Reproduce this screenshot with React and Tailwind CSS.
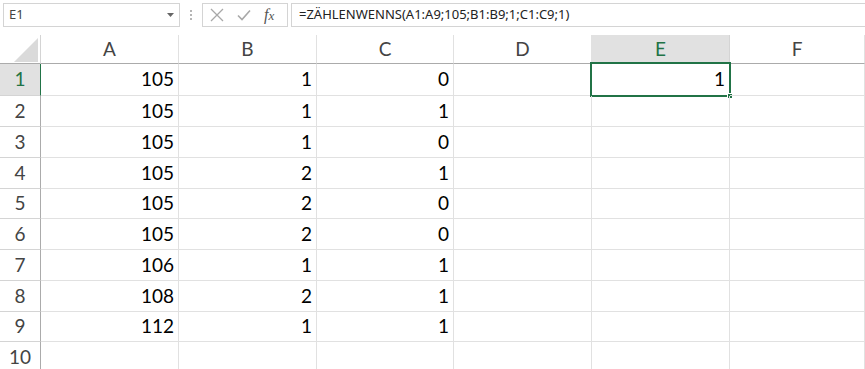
import React from "react";

const cols = ["A", "B", "C", "D", "E", "F"];
const data = [
  [105, 1, 0],
  [105, 1, 1],
  [105, 1, 0],
  [105, 2, 1],
  [105, 2, 0],
  [105, 2, 0],
  [106, 1, 1],
  [108, 2, 1],
  [112, 1, 1],
  [null, null, null],
];
const heights = ["h-[32px]", "h-[31px]", "h-[31px]", "h-[31px]", "h-[30px]", "h-[31px]", "h-[31px]", "h-[31px]", "h-[30px]", "h-[31px]"];

export default function App() {
  return (
    <div className="w-[865px] h-[369px] overflow-hidden bg-white" style={{ fontFamily: "Lato, 'Liberation Sans', sans-serif" }}>
      {/* Toolbar */}
      <div className="h-[35px] flex items-start pt-[3px]">
        <div className="ml-[3px] w-[177px] h-[24px] border border-[#d4d4d4] flex items-center justify-between pl-[5px] pr-[5px]">
          <span className="text-[13px] text-[#444]" style={{ fontFamily: "'Noto Sans', sans-serif" }}>E1</span>
          <svg width="7" height="4" viewBox="0 0 7 4"><path d="M0 0h7L3.5 4z" fill="#666" /></svg>
        </div>
        <div className="w-[22px] h-[24px] flex flex-col items-center justify-center gap-[2px]">
          <span className="w-[2px] h-[2px] bg-[#b5b5b5]" />
          <span className="w-[2px] h-[2px] bg-[#b5b5b5]" />
          <span className="w-[2px] h-[2px] bg-[#b5b5b5]" />
        </div>
        <div className="w-[86px] h-[24px] border border-[#d4d4d4] flex items-center pl-[7px]">
          <svg width="14" height="14" viewBox="0 0 14 14" className="mr-[13px]"><path d="M1 1L13 13M13 1L1 13" stroke="#a8a8a8" strokeWidth="1.3" fill="none" /></svg>
          <svg width="14" height="12" viewBox="0 0 14 12" className="mr-[13px]"><path d="M1 6.5L5 10.5L13 1.5" stroke="#a8a8a8" strokeWidth="1.6" fill="none" /></svg>
          <span className="text-[16px] italic text-[#555] leading-none" style={{ fontFamily: "'Liberation Serif', serif" }}>f<span className="text-[13px]">x</span></span>
        </div>
        <div className="ml-[3px] flex-1 h-[24px] border border-r-0 border-[#d4d4d4] flex items-center pl-[7px]">
          <span className="text-[13px] text-[#222]" style={{ fontFamily: "'Noto Sans', sans-serif" }}>=ZÄHLENWENNS(A1:A9;105;B1:B9;1;C1:C9;1)</span>
        </div>
      </div>

      {/* Grid */}
      <div className="grid grid-cols-[41px_138px_138px_137px_138px_138px_1fr]">
        {/* header row */}
        <div className="h-[29px] border-r border-b border-r-[#d4d4d4] border-b-[#ababab] relative">
          <svg width="25" height="25" viewBox="0 0 25 25" className="absolute left-[14px] top-[3px]"><path d="M24 0V24H0z" fill="#dadada" /></svg>
        </div>
        {cols.map((c) => {
          const sel = c === "E";
          return (
            <div
              key={c}
              className={
                "h-[29px] border-r border-b flex items-center justify-center text-[19px] " +
                (sel
                  ? "bg-[#e1e1e1] text-[#217346] border-r-[#d4d4d4] border-b-[#217346]"
                  : "text-[#444] border-r-[#e1e1e1] border-b-[#ababab]")
              }
            >
              {c}
            </div>
          );
        })}
        {data.map((row, i) => {
          const sel = i === 0;
          return (
            <React.Fragment key={i}>
              <div
                className={
                  heights[i] +
                  " border-b border-r flex items-center justify-center text-[19px] " +
                  (sel
                    ? "bg-[#e1e1e1] text-[#217346] border-r-[#217346] border-b-[#d4d4d4]"
                    : "text-[#444] border-r-[#ababab] border-b-[#d4d4d4]")
                }
              >
                {i + 1}
              </div>
              {[0, 1, 2, 3, 4, 5].map((j) => {
                const v = j < 3 ? row[j] : sel && j === 4 ? 1 : null;
                const selCell = sel && j === 4;
                return (
                  <div
                    key={j}
                    className={heights[i] + " border-r border-b border-[#e1e1e1] flex items-center justify-end pr-[4px] text-[19px] text-black relative"}
                  >
                    {selCell && (
                      <div className="absolute left-[-2px] top-[-2px] right-[-2px] bottom-[-2px] border-2 border-[#217346]">
                        <div className="absolute right-[-4px] bottom-[-4px] w-[6px] h-[6px] bg-[#217346] border border-white" />
                      </div>
                    )}
                    {v !== null ? v : ""}
                  </div>
                );
              })}
            </React.Fragment>
          );
        })}
      </div>
    </div>
  );
}
